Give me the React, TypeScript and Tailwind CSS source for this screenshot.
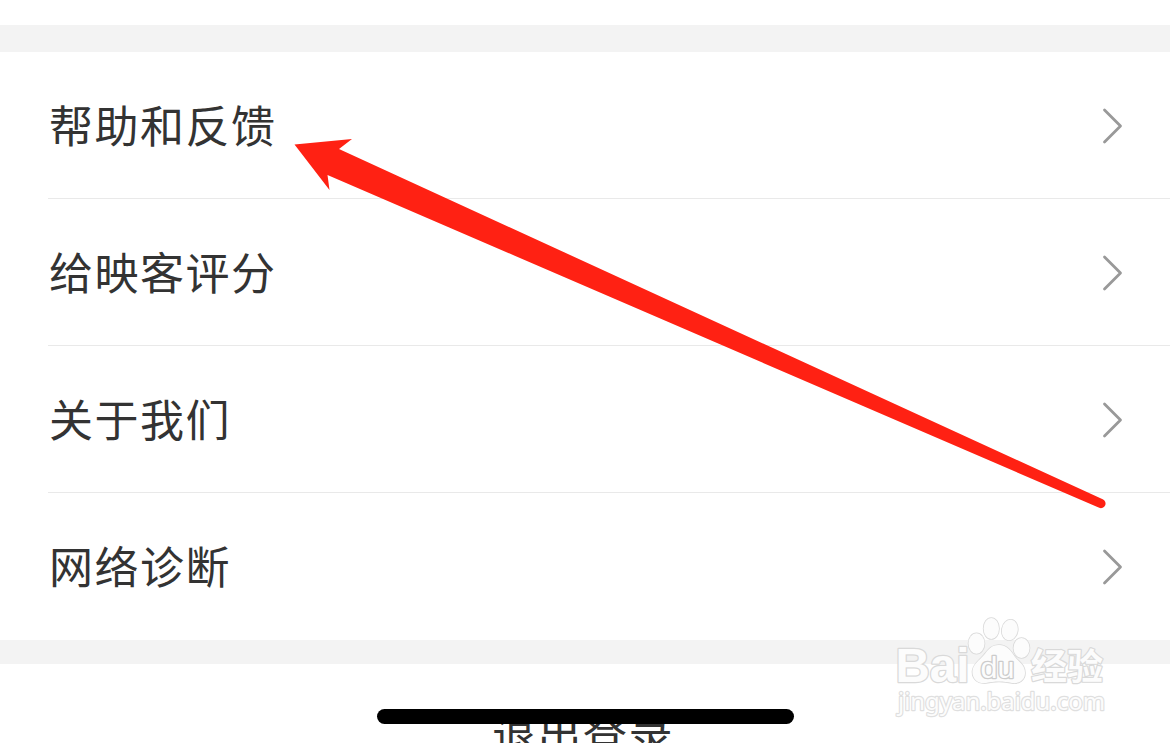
const menuItems = ["帮助和反馈", "给映客评分", "关于我们", "网络诊断"];

function Chevron() {
  return (
    <svg width="24" height="40" viewBox="0 0 24 40" fill="none" className="shrink-0">
      <path d="M4.500 4L20.500 20L4.500 36" stroke="#999999" strokeWidth="2.8" strokeLinecap="round" strokeLinejoin="round" />
    </svg>
  );
}

function PointerArrow() {
  return (
    <svg
      width="1170"
      height="743"
      viewBox="0 0 1170 743"
      className="pointer-events-none absolute left-0 top-0"
    >
      <path
        d="M294.500 144.500L352 139L339 149L1102.700 499.300A4.500 4.500 0 0 1 1099.200 507.800L327.500 175L329.500 190Z"
        fill="#ff2113"
      />
    </svg>
  );
}

function Watermark() {
  return (
    <svg
      width="240"
      height="130"
      viewBox="0 0 240 130"
      className="pointer-events-none absolute left-[880px] top-[600px] tracking-normal"
      fill="#fcfcfc"
      stroke="#d9d9d9"
      strokeWidth="1.6"
      strokeLinejoin="round"
      style={{ paintOrder: "stroke" }}
    >
      <text x="15.500" y="82" fontSize="48" fontWeight="700" strokeWidth="2.600" textLength="74" lengthAdjust="spacingAndGlyphs" className="font-['Liberation_Sans',sans-serif]">
        Bai
      </text>
      <ellipse cx="96.500" cy="43.500" rx="8" ry="10.200" />
      <ellipse cx="111.300" cy="28.500" rx="7.700" ry="10.500" />
      <ellipse cx="129.800" cy="30" rx="7.900" ry="10.300" transform="rotate(10 129.800 30)" />
      <ellipse cx="141.500" cy="48" rx="8" ry="10" />
      <path d="M119 45C127 45 131 51 135 57C140 63 145 65 145 73C145 80 139 84 132 83C124 81 114 81 106 83C98 84 92 79 92.500 71C93 64 99 61 104 55C108 50 111 45 119 45Z" />
      <text x="100.500" y="78" fontSize="29" fontWeight="400" stroke="#cccccc" strokeWidth="2.600" textLength="34" lengthAdjust="spacingAndGlyphs" className="font-['Liberation_Sans',sans-serif]">
        du
      </text>
      <text x="151" y="79.500" fontSize="36" fontWeight="700" strokeWidth="2.400" textLength="72" lengthAdjust="spacingAndGlyphs" className="font-['Noto_Sans_CJK_SC',sans-serif]">
        经验
      </text>
      <text x="18" y="110" fontSize="24" fontWeight="400" stroke="#dfdfdf" strokeWidth="2.400" textLength="207" lengthAdjust="spacingAndGlyphs" className="font-['Noto_Sans',sans-serif]">
        jingyan.baidu.com
      </text>
    </svg>
  );
}

export default function App() {
  return (
    <div className="relative flex h-[743px] w-[1170px] flex-col overflow-hidden bg-white font-['Liberation_Sans','Noto_Sans_CJK_SC',sans-serif] text-[44px] tracking-[1.5px] text-[#333333]">
      <div className="mt-[25px] h-[27px] shrink-0 bg-[#f3f3f3]" />

      <ul className="h-[588px] shrink-0 pl-12">
        {menuItems.map((label) => (
          <li
            key={label}
            className="flex h-[147px] items-center justify-between border-b border-[#e9e9e9] pr-[46px] pt-0.5 last:border-transparent"
          >
            <span className="pl-px pt-[3px] leading-[64px]">{label}</span>
            <Chevron />
          </li>
        ))}
      </ul>

      <div className="h-6 shrink-0 bg-[#f3f3f3]" />

      <button className="mt-[41px] shrink-0 pr-1 text-center leading-[64px]">退出登录</button>

      {/* home indicator */}
      <div className="absolute left-[377px] top-[709px] h-[15px] w-[417px] rounded-full bg-black" />

      <Watermark />
      <PointerArrow />
    </div>
  );
}
